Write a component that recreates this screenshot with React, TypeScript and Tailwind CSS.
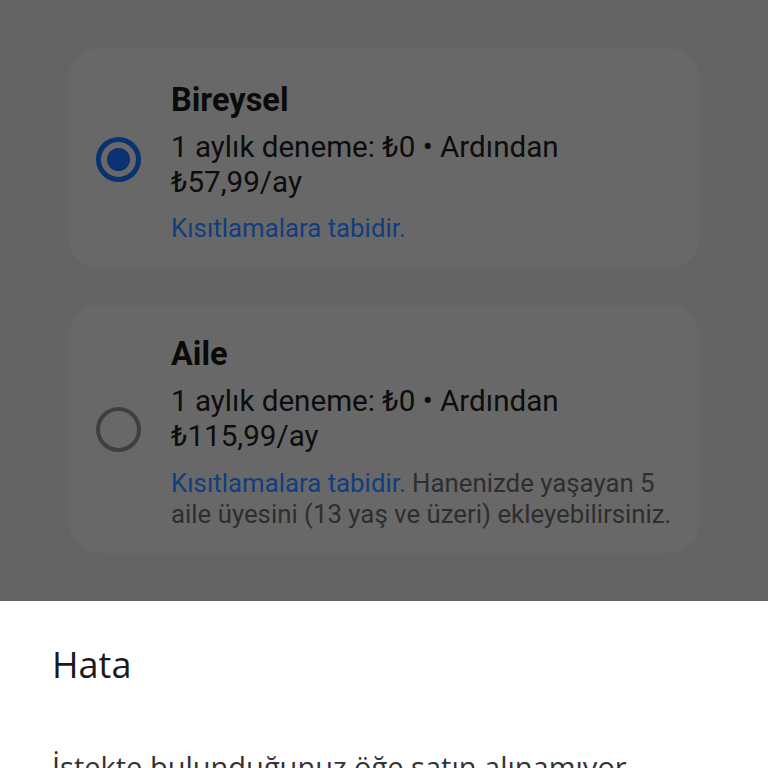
export default function App() {
  return (
    <div className="w-[768px] h-[768px] overflow-hidden flex flex-col bg-[#646464]" style={{ fontFamily: "Roboto, 'Noto Sans', sans-serif" }}>
      <div className="flex flex-col gap-[37px] pt-[48px] px-[68px] h-[601px] shrink-0">
        {/* Bireysel */}
        <div className="flex rounded-[32px] bg-[#686868] h-[220px] pt-[32px] pl-[28px] pr-[20px]">
          <div className="w-[75px] shrink-0 pt-[57px]">
            <div className="w-[45px] h-[45px] rounded-full border-[5px] border-[#0b3270] flex items-center justify-center">
              <div className="w-[23px] h-[23px] rounded-full bg-[#0b3270]" />
            </div>
          </div>
          <div className="flex flex-col">
            <p className="text-[32.5px] leading-[40px] font-bold text-[#0a0a0a]">Bireysel</p>
            <p className="mt-[10px] text-[29.6px] leading-[35px] text-[#0d0d0d]">
              1 aylık deneme: ₺0 • Ardından<br />₺57,99/ay
            </p>
            <p className="mt-[13px] text-[25.8px] leading-[31px] text-[#133d7c]">Kısıtlamalara tabidir.</p>
          </div>
        </div>

        {/* Aile */}
        <div className="flex rounded-[32px] bg-[#686868] h-[248px] pt-[29px] pl-[28px] pr-[20px]">
          <div className="w-[75px] shrink-0 pt-[73px]">
            <div className="w-[45px] h-[45px] rounded-full border-[4px] border-[#3f3f3f]" />
          </div>
          <div className="flex flex-col">
            <p className="text-[32.5px] leading-[40px] font-bold text-[#0a0a0a]">Aile</p>
            <p className="mt-[10px] text-[29.6px] leading-[35px] text-[#0d0d0d]">
              1 aylık deneme: ₺0 • Ardından<br />₺115,99/ay
            </p>
            <p className="mt-[14px] text-[25.8px] leading-[31px] text-[#2e2e2e]">
              <span className="text-[#133d7c]">Kısıtlamalara tabidir.</span> Hanenizde yaşayan 5 aile üyesini (13 yaş ve üzeri) ekleyebilirsiniz.
            </p>
          </div>
        </div>
      </div>

      {/* Error sheet */}
      <div className="flex-1 bg-white px-[52px] pt-[43px]" style={{ fontFamily: "'Open Sans', Roboto, sans-serif" }}>
        <p className="text-[36px] leading-[42px] text-[#1a1a1a]">Hata</p>
        <p className="mt-[62px] text-[29px] leading-[38px] text-[#333333] whitespace-nowrap">İstekte bulunduğunuz öğe satın alınamıyor.</p>
      </div>
    </div>
  );
}
